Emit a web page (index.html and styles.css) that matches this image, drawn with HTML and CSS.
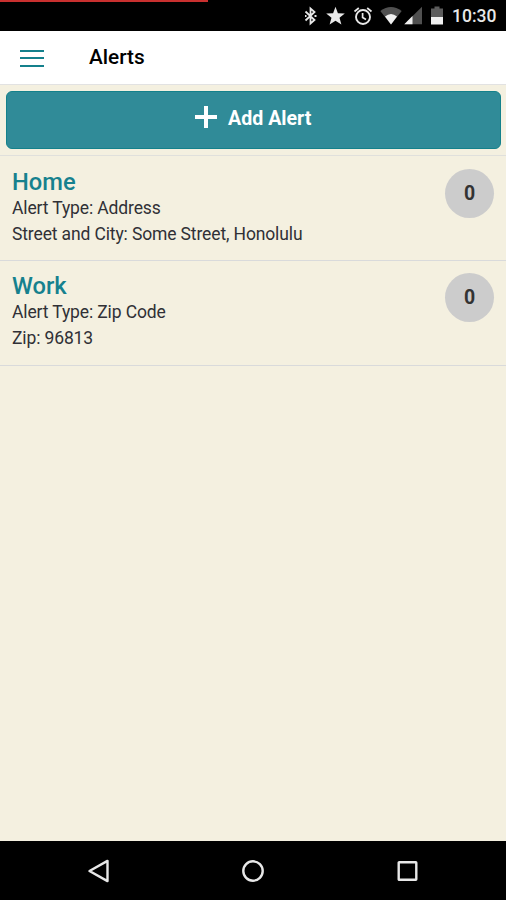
FILE: index.html
```html
<!DOCTYPE html>
<html lang="en">
<head>
<meta charset="utf-8">
<title>Alerts</title>
<link rel="stylesheet" href="styles.css">
</head>
<body>
<div class="screen">
  <div class="status">
    <span class="progress"></span>
    <svg class="bt" width="13" height="20" viewBox="0 0 13 20" fill="none" stroke="#e8e8e8" stroke-width="1.8"><path d="M1.500 5.500 10.500 14 6.500 17.500V2.500L10.500 6 1.500 14.500"/><path d="M1 10h1.500M10.500 10h2"/></svg>
    <svg class="star" width="20" height="20" viewBox="0 0 20 20" fill="#e8e8e8"><path d="m10.500.8 2.400 6.400 6.900.3-5.300 4.300 1.900 6.700-5.900-3.800-5.900 3.800 1.900-6.700-5.300-4.300 6.900-.3z"/></svg>
    <svg class="alarm" width="20" height="20" viewBox="0 0 20 20" fill="none" stroke="#e8e8e8" stroke-width="1.900"><circle cx="10" cy="11" r="7"/><path d="M1.500 5.500 5.800 2M14.200 2l4.300 3.500M9.600 7v4.600l3.400 2" stroke-width="1.700"/></svg>
    <svg class="wifi" width="23" height="20" viewBox="0 0 23 20"><path fill="#505050" d="M.3 5Q11-3 21.700 5L11 18.500z"/><path fill="#f0f0f0" d="M5 10.500q6-5 12 0L11 18.500z"/></svg>
    <svg class="signal" width="19" height="20" viewBox="0 0 19 20"><path fill="#505050" d="M18 .8V18.300H.3z"/><path fill="#f0f0f0" d="M8.500 10v8.300H.3z"/></svg>
    <svg class="battery" width="12" height="20" viewBox="0 0 12 20"><path fill="#5c5c5c" d="M3.500.5h5v2H12V11H0V2.500h3.500z"/><path fill="#f0f0f0" d="M0 11h12v7.500H0z"/></svg>
    <span class="time">10:30</span>
  </div>
  <header class="bar">
    <div class="menu"><i></i><i></i><i></i></div>
    <h1>Alerts</h1>
  </header>
  <main>
    <div class="action">
      <button class="add"><svg width="22" height="22" viewBox="0 0 22 22" fill="none" stroke="#fff" stroke-width="4"><path d="M11 0v22M0 11h22"/></svg><span>Add Alert</span></button>
    </div>
    <section class="alert">
      <div><h2>Home</h2><p>Alert Type: Address</p><p>Street and City: Some Street, Honolulu</p></div>
      <span class="count">0</span>
    </section>
    <section class="alert">
      <div><h2>Work</h2><p>Alert Type: Zip Code</p><p>Zip: 96813</p></div>
      <span class="count">0</span>
    </section>
  </main>
  <nav>
    <svg width="24" height="24" viewBox="0 0 24 24"><path d="M2.500 12 20.500 1.900v20.200z"/></svg>
    <svg width="24" height="24" viewBox="0 0 24 24"><circle cx="12" cy="12" r="9.700"/></svg>
    <svg width="24" height="24" viewBox="0 0 24 24"><rect x="3.700" y="3.200" width="17.600" height="17.600" rx=".5"/></svg>
  </nav>
</div>
</body>
</html>
```
FILE: styles.css
```css
* { box-sizing: border-box; }
body { margin: 0; font-family: Roboto, sans-serif; }
h1, h2, p { margin: 0; }
svg { display: block; flex: none; }
.screen { width: 506px; height: 900px; display: flex; flex-direction: column; background: #f4f0e0; }
.status { position: relative; height: 31px; background: #000; display: flex; align-items: center; justify-content: flex-end; padding-right: 9px; flex: none; }
.progress { position: absolute; left: 0; top: 0; width: 208px; height: 2px; background: #c9302f; }
.bt { margin-right: 8px; }
.star { margin-right: 8px; }
.alarm { margin-right: 7px; }
.wifi { margin-right: 1px; }
.signal { margin-right: 8px; }
.battery { margin-right: 9px; }
.time { width: 45px; font-size: 17.500px; line-height: 20px; font-weight: 500; color: #e8e8e8; white-space: nowrap; padding-top: 1px; }
.bar { height: 54px; background: #fff; border-bottom: 1px solid #e2e2e2; display: flex; align-items: center; padding-left: 20px; flex: none; }
.menu { width: 24px; display: grid; gap: 5.500px; margin-right: 45px; padding-top: 1px; }
.menu i { height: 2px; background: #14808c; }
.bar h1 { font-size: 20.800px; line-height: 26px; font-weight: 500; color: #000; position: relative; top: -1px; }
main { flex: 1; }
.action { height: 71px; padding: 6px 5.500px 0 6px; border-bottom: 1px solid #e0e0dc; }
.add { width: 100%; height: 58px; border: 1px solid #14818b; border-radius: 6px; background: #308b98; color: #fff; font: 700 19.600px/24px Roboto, sans-serif; display: flex; justify-content: center; align-items: center; gap: 11px; padding: 0 0 6px; }
.add span { padding-top: 3px; }
.alert { height: 105px; border-bottom: 1px solid #d9dadb; padding: 12px 12px 0; display: flex; justify-content: space-between; }
.alert + .alert { padding-top: 11px; }
.alert h2 { font-size: 23.700px; line-height: 28px; font-weight: 500; color: #16818e; }
.alert p { font-size: 17.500px; line-height: 25.900px; color: #303036; letter-spacing: -.13px; }
.count { width: 49px; height: 49px; margin-top: 1px; border-radius: 50%; background: #ccc; color: #333; display: flex; align-items: center; justify-content: center; font-size: 19.500px; font-weight: 700; }
nav { height: 59px; background: #000; display: flex; justify-content: space-between; align-items: center; padding: 0 87px; flex: none; }
nav svg { fill: none; stroke: #e8e8e8; stroke-width: 2.400; stroke-linejoin: round; }
```
